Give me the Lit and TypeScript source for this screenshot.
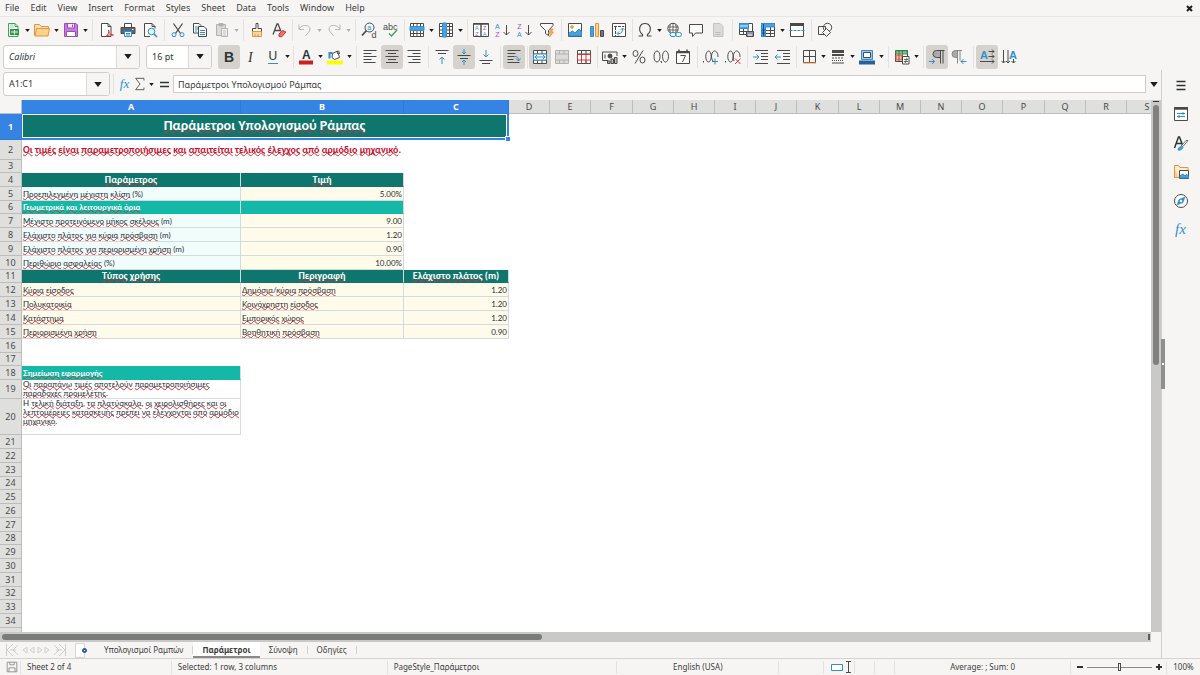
import { LitElement, html, css, svg, nothing, type TemplateResult } from "lit";
import { customElement, property } from "lit/decorators.js";
import { classMap } from "lit/directives/class-map.js";

const G = "#4a4a48";
const B = "#2f8fd0";
const O = "#e8923c";

const letter = (x: number, y: number, size: number, fill: string, t: string, extra = "") => svg`
  <text x=${x} y=${y} font-size=${size} fill=${fill} stroke="none" class=${extra}>${t}</text>`;

const icons: Record<string, TemplateResult> = {
  new: svg`<path d="M3.5 1.5h6.5l3 3v10h-9.5z" fill="#fff" stroke="#3aa655"/><path d="M10 1.5v3h3" stroke="#3aa655"/><path d="M5.5 7.5h8v5h-8z" fill="#3aa655" stroke="#2c8a45"/><path d="M6 10h7M9.500 8v4.500" stroke="#d6f2dc"/><path d="M5 3h3M5 5h4" stroke="#8fd09f"/>`,
  open: svg`<path d="M.5 13.500v-11h5l1.500 2h7.500v3" fill="#fbe3b8" stroke="${O}"/><path d="M2.500 6.500h13l-1.500 7.500h-13z" fill="#fad48c" stroke="${O}"/>`,
  save: svg`<path d="M1.500 1.500h11.500l1.500 1.500v11.500h-13z" fill="#c77bd8" stroke="#9b4db5"/><path d="M4.500 1.500h7v4.500h-7z" fill="#f6ecf9" stroke="#9b4db5"/><path d="M3.500 9.500h9v5h-9z" fill="#fff" stroke="#9b4db5"/><path d="M9.500 2.500v2.500" stroke="#9b4db5"/>`,
  pdf: svg`<path d="M3.500 1.500h6.500l3 3v10h-9.500z" fill="#fff" stroke="${G}"/><path d="M10 1.500v3h3" stroke="${G}"/><path d="M8 14.500c2-1.500 3-4 2.600-6.500 .8 4 2.500 5.500 4.900 5-3-.6-5.500-.3-7.500 1.500z" fill="#fff" stroke="#d9383a"/>`,
  print: svg`<path d="M4.500 5.500v-4h7v4" fill="#fff" stroke="${G}"/><path d="M1 5.500h14v6h-14z" fill="#5b6670" stroke="${G}"/><path d="M4.500 9.500h7v5h-7z" fill="#fff" stroke="${B}"/><path d="M6 11.500h4M6 13h4" stroke="${B}"/><path d="M12 7.500h1.500" stroke="#fff"/>`,
  preview: svg`<path d="M8 14.500h-5.500v-13h7.500l3 3v2" fill="#fff" stroke="${G}"/><path d="M10 1.500v3h3" stroke="${G}"/><circle cx="9.500" cy="9.500" r="3.300" fill="#e3f2fb" stroke="${B}"/><path d="M12 12l3 3" stroke="${B}" stroke-width="1.600"/>`,
  cut: svg`<path d="M3.500 1.500l7 10M12.500 1.500l-7 10" stroke="${G}" stroke-width="1.300"/><circle cx="4" cy="12.700" r="2" stroke="${B}"/><circle cx="12" cy="12.700" r="2" stroke="${B}"/>`,
  copy: svg`<path d="M1.500 1.500h5.500l2 2v7.500h-7.500z" fill="#fff" stroke="${G}"/><path d="M3 5h3M3 7h3M3 9h2" stroke="${B}"/><path d="M6.500 4.500h5.500l2.500 2.500v7.500h-8z" fill="#fff" stroke="${G}"/><path d="M8 8.500h5M8 10.500h5M8 12.500h5" stroke="${B}"/>`,
  paste: svg`<path d="M2.500 2.500h9v11h-9z" fill="#dcdbd9" stroke="#b3b1ae"/><path d="M5 1.500h4v2.500h-4z" fill="#b3b1ae" stroke="#b3b1ae"/><path d="M7.500 6.500h6v8h-6z" fill="#f2f1f0" stroke="#b3b1ae"/><path d="M9 9h3M9 11h3M9 13h3" stroke="#c4c2bf"/>`,
  clone: svg`<path d="M7 1.500h2v5h3.500v3h-9v-3h3.500z" fill="#fff" stroke="${G}"/><path d="M3.500 9.500h9v5h-9z" fill="#fbd9a5" stroke="${O}"/><path d="M6 12v2M9 12v2" stroke="${O}"/>`,
  clear: svg`<path d="M2 12.500l4-10.500h1l3 7.500M3.500 8.500h5.500" stroke="${G}" stroke-width="1.300"/><path d="M8 12l3.500-3.500 3.500 1.500-4.500 5-2.500-.5z" fill="#ef6d6d" stroke="#d9383a"/>`,
  undo: svg`<path d="M2 2.500v5h5M2 7c3-5 11-4.500 11 0 0 3-3 4-4.500 7" stroke="#b9b7b4"/>`,
  redo: svg`<path d="M14 2.500v5h-5M14 7c-3-5-11-4.500-11 0 0 3 3 4 4.500 7" stroke="#b9b7b4"/>`,
  find: svg`<circle cx="8.500" cy="5.500" r="4.500" fill="#eef7fd" stroke="${G}"/><path d="M5.500 8.500l-4.500 5" stroke="${G}" stroke-width="1.800"/>${letter(6.200, 8, 7, B, "a")}${letter(10.500, 15.500, 9, G, "d")}`,
  spell: svg`${letter(0, 7.500, 9, G, "abc")}<path d="M6 11.500l2.500 2.500 5.500-6" stroke="#35a853" stroke-width="1.400"/>`,
  row: svg`<path d="M1.500 1.500h13v13h-13zM4.500 1.500v13M8 1.500v13M11.500 1.500v13M1.500 11.500h13" fill="#fff" stroke="${G}"/><path d="M1 4.500h14v4h-14z" fill="#4ba0e0" stroke="${B}"/>`,
  col: svg`<path d="M1.500 1.500h13v13h-13zM1.500 4.500h13M1.500 8h13M1.500 11.500h13M11.500 1.500v13" fill="#fff" stroke="${G}"/><path d="M4.500 1h4v14h-4z" fill="#4ba0e0" stroke="${B}"/>`,
  sort: svg`<path d="M.5 1.500h15v13h-15z" fill="#fff" stroke="${G}"/><path d="M.5 2h15M8 2v12.500" stroke="${G}" stroke-width="1.400"/>${letter(2, 8, 5.500, B, "A")}${letter(2.300, 14, 5.500, "#a44cc0", "Z")}${letter(10, 8, 5.500, "#a44cc0", "Z")}${letter(9.800, 14, 5.500, B, "A")}`,
  asc: svg`${letter(0, 6.500, 7, B, "A")}${letter(.3, 14.500, 7, "#a44cc0", "Z")}<path d="M11.500 3v10M8.500 10l3 3 3-3" stroke="${G}"/>`,
  desc: svg`${letter(.3, 6.500, 7, "#a44cc0", "Z")}${letter(0, 14.500, 7, B, "A")}<path d="M11.500 3v10M8.500 10l3 3 3-3" stroke="${G}"/>`,
  filter: svg`<path d="M1.500 1.500h12.500v2l-4.500 5v5l-3-2v-3l-5-5z" fill="#fff" stroke="${G}"/><path d="M12 7l-2.500 4.500h2l-1 3.500 4-5h-2l1.500-3z" fill="#f7b25a" stroke="${O}" stroke-width=".8"/>`,
  image: svg`<path d="M1.500 1.500h13v13h-13z" fill="#fff" stroke="${G}"/><path d="M2 14v-3l3.500-2 2.500 2 4-4 2.500 2.500v4.500z" fill="#4ba0e0" stroke="${B}"/><circle cx="5" cy="5" r="1.300" fill="#f7b25a" stroke="${O}"/>`,
  chart: svg`<path d="M1.500 4.500h3v10h-3z" fill="#4ba0e0" stroke="${B}"/><path d="M6.500 1.500h3v13h-3z" fill="#fad48c" stroke="${O}"/><path d="M11.500 8.500h3v6h-3z" fill="#777" stroke="${G}"/>`,
  pivot: svg`<path d="M1.500 1.500h13v13h-13z" fill="#fff" stroke="${G}"/><path d="M3 4.500h10M4.500 5v9" stroke="${G}" stroke-dasharray="3 1"/><path d="M6.500 11.500c4 .5 5-1.500 5-5M6 11.500l2-2M6 11.500l2 2M11.500 6l-2 2M11.500 6l2 2" stroke="${B}"/>`,
  omega: svg`<path d="M1.500 14h4v-1.500c-5-4-3-11 2.500-11s7.500 7 2.500 11v1.500h4" stroke="${G}" stroke-width="1.200"/>`,
  link: svg`<circle cx="7" cy="6.500" r="5.200" fill="#fff" stroke="${G}"/><path d="M2 5h10M2 8h10M7 1.500v10M4.500 2.500c-1 3-1 5 0 8M9.500 2.500c1 3 1 5 0 8" stroke="${G}" stroke-width=".8"/><rect x="4" y="10.500" width="6" height="4" rx="2" fill="#f6f5f4" stroke="${B}"/><rect x="9.500" y="10.500" width="6" height="4" rx="2" stroke="${B}"/>`,
  comment: svg`<path d="M1.500 2.500h13v8.500h-7l-3 3.500v-3.500h-3z" fill="#fff" stroke="${G}"/>`,
  header: svg`<path d="M3.500 1.500h6.500l3 3v10h-9.500z" fill="#dcdbd9" stroke="#c4c2bf"/><path d="M5.500 10.500h5M5.500 12.500h5" stroke="#bbb"/>`,
  printarea: svg`<path d="M1.500 1.500h13v11h-13zM5.500 1.500v11M10 1.500v11M1.500 9.500h13" fill="#fff" stroke="${G}"/><path d="M1.500 1.500h9v5h-9z" fill="#4ba0e0" stroke="${B}"/><path d="M2 4h8" stroke="#d5ebf8"/><path d="M8.500 9.500h7v5h-7z" fill="#8c98a4" stroke="${G}"/><path d="M10 13h4" stroke="#fff"/>`,
  freeze: svg`<path d="M1.500 1.500h13v13h-13zM10.500 1.500v13M1.500 8.500h13M1.500 11.500h13" fill="#fff" stroke="${G}"/><path d="M1.500 1.500h13v3.500h-9v9.500h-4z" fill="#4ba0e0" stroke="${B}"/><path d="M3.500 2v12M2 8h3M2 11h3" stroke="#174f7c"/>`,
  split: svg`<path d="M1.500 1.500h13v13h-13z" fill="#fff" stroke="${G}"/><path d="M1 2.500h14" stroke="${G}" stroke-width="3"/><path d="M.5 8.500h15" stroke="${B}" stroke-dasharray="3 1"/>`,
  shapes: svg`<path d="M1.500 4.500h7v8h-7z" stroke="${G}"/><circle cx="10.500" cy="5.500" r="4.200" stroke="${G}"/><path d="M9.500 6.500l4 4-4 4-4-4z" fill="#f6f5f4" stroke="${G}"/>`,
  bold: svg`${letter(3, 13, 14, "#2e3436", "B", "b")}`,
  italic: svg`${letter(5, 13, 14, "#2e3436", "I", "i")}`,
  underline: svg`${letter(3.500, 11, 12, "#2e3436", "U")}<path d="M3 14.500h10" stroke="${B}"/>`,
  fontcolor: svg`${letter(4, 9.500, 12, "#2e3436", "A", "m")}<path d="M1 13.500h14" stroke="#c9211e" stroke-width="4"/>`,
  highlight: svg`<path d="M5.500 4.500l5-2.500 2 6.500-5 2-2.500-2z" fill="#fff" stroke="${G}"/><path d="M10.500 5c-1-4 2-4 2 0" stroke="${G}"/><path d="M2.500 9.500v-5.500h3" stroke="${B}" stroke-width="2"/><path d="M0 13.500h16" stroke="#ffff00" stroke-width="4"/>`,
  left: svg`<path d="M1.500 1.500h13M1.500 4.500h8M1.500 7.500h13M1.500 10.500h8M1.500 13.500h12" stroke="${G}"/>`,
  center: svg`<path d="M1.500 1.500h13M4 4.500h8M1.500 7.500h13M4 10.500h8M2 13.500h12" stroke="${G}"/>`,
  right: svg`<path d="M1.500 1.500h13M6.500 4.500h8M1.500 7.500h13M6.500 10.500h8M2.500 13.500h12" stroke="${G}"/>`,
  top: svg`<path d="M1.500 1.500h13M4 4.500h8" stroke="${G}"/><path d="M8 15v-7M5.500 10.500l2.500-2.500 2.500 2.500" stroke="${B}"/>`,
  middle: svg`<path d="M1.500 6.500h13M4 9.500h8" stroke="${G}"/><path d="M8 0v5M6 3l2 2 2-2M8 16v-5M6 13l2-2 2 2" stroke="${B}"/>`,
  bottom: svg`<path d="M1.500 11.500h13M4 14.500h8" stroke="${G}"/><path d="M8 1v7M5.500 5.500l2.500 2.500 2.500-2.500" stroke="${B}"/>`,
  wrap: svg`<path d="M1.500 1.500h13M1.500 4.500h8M1.500 7.500h8M1.500 10.500h6M1.500 13.500h12" stroke="${G}"/><path d="M8 7.500c4 0 4.500 1 4.500 4M10 9.500l2.500 2.500 2-2.500" stroke="${B}"/>`,
  merge: svg`<path d="M1.500 1.500h13v13h-13zM1.500 5h13M1.500 11h13M5.500 1.500v3.500M10 1.500v3.500M5.500 11v3.500M10 11v3.500" fill="#fff" stroke="${G}"/><path d="M1.500 5h13v6h-13z" fill="#fff" stroke="${B}"/><path d="M2.500 8h11M5 6l-2 2 2 2M11 6l2 2-2 2" stroke="${B}"/>`,
  mergecells: svg`<path d="M1.500 1.500h13v13h-13zM1.500 5h13M1.500 11h13M5.500 1.500v3.500M10 1.500v3.500M5.500 11v3.500M10 11v3.500" fill="#dcdbd9" stroke="#b3b1ae"/>`,
  unmerge: svg`<path d="M1.500 1.500h13v13h-13zM1.500 5h13M5.500 1.500v3.500M10 1.500v3.500M5.500 11v3.500M10 11v3.500" fill="#fff" stroke="${G}"/><path d="M1.500 5.500h13v5.500h-13zM5.500 5.500v9M10 5.500v9" stroke="#d9383a"/>`,
  currency: svg`<path d="M6 11.500h-5.500v-8.500h14.500v4" stroke="${G}"/><circle cx="8" cy="7" r="2" fill="${G}" stroke="${G}"/><path d="M3 5.500v4" stroke="${G}"/><path d="M5.500 12h2.500v2.500h-2.500zM9 10h2.500v4.500h-2.500zM12.500 8.500h2.500v6h-2.500z" fill="#bbb" stroke="${G}"/>`,
  percent: svg`<ellipse cx="4.500" cy="4.500" rx="2.500" ry="3" stroke="${G}"/><ellipse cx="11.500" cy="11" rx="2.500" ry="3" stroke="${G}"/><path d="M12 1.500l-8 13" stroke="${G}"/>`,
  number: svg`<ellipse cx="4" cy="7.500" rx="3" ry="5.500" stroke="${G}"/><ellipse cx="12.500" cy="7.500" rx="3" ry="5.500" stroke="${G}"/><path d="M7.500 12.500h1v1.500" stroke="${G}"/>`,
  date: svg`<path d="M1.500 2.500h13v12h-13z" fill="#fff" stroke="${G}"/><path d="M1.500 3.500h13M4 .5v3M12 .5v3" stroke="${G}" stroke-width="1.500"/><path d="M5.500 6.500h5l-3 6.500" stroke="${G}"/>`,
  adddec: svg`<path d="M.5 12v1.500" stroke="${G}"/><ellipse cx="5.500" cy="7.500" rx="2.700" ry="5.500" stroke="${G}"/><path d="M10 12c-3-4-1-10 1.500-10s3.500 3 3.500 6" stroke="${G}"/><path d="M12 9.500v6M9 12.500h6" stroke="${B}"/>`,
  deldec: svg`<path d="M.5 12v1.500" stroke="${G}"/><ellipse cx="5.500" cy="7.500" rx="2.700" ry="5.500" stroke="${G}"/><path d="M9 12c-2-4 0-10 2.500-10s3.500 3 3.500 6" stroke="${G}"/><path d="M10 9.500l5.500 5.500M15.500 9.500l-5.500 5.500" stroke="#d9383a"/>`,
  indent: svg`<path d="M2 1.500h13M8 4.500h7M8 7.500h7M8 10.500h7M2 14.500h13" stroke="${G}"/><path d="M0 8h6M3.500 5.500l2.500 2.500-2.500 2.500" stroke="${B}"/>`,
  outdent: svg`<path d="M2 1.500h13M8 4.500h7M8 7.500h7M8 10.500h7M2 14.500h13" stroke="${G}"/><path d="M0 8h6M2.500 5.500l-2.500 2.500 2.500 2.500" stroke="${B}"/>`,
  borders: svg`<path d="M2.500 1.500v12h12v-12z" stroke="${G}"/><path d="M8.500 2v12M2.500 7.500h12" stroke="${G}"/><path d="M2 14h13" stroke="${O}"/>`,
  style: svg`<path d="M2 2.500h12" stroke="${G}" stroke-width="3"/><path d="M2 6h12" stroke="${G}" stroke-width="2"/><path d="M2 9h12" stroke="${G}" stroke-dasharray="2 1"/><path d="M2 11.500h12" stroke="${G}" stroke-dasharray="1 1"/><path d="M2 14h12" stroke="${G}"/>`,
  linecolor: svg`<path d="M2.500 1.500h11v9h-11z" fill="#9cc8ea" stroke="${B}"/><path d="M4.500 3.500h7v5h-7z" fill="#fff" stroke="${G}"/><path d="M0 13.500h16" stroke="#2a6099" stroke-width="4"/>`,
  cond: svg`<path d="M1.500 1.500h12v11h-12z" fill="#fff" stroke="${G}"/><path d="M2 2h11v3h-11z" fill="#7dcc8c" stroke="#3aa655"/><path d="M2 6h6v5h-6z" fill="#f7b58a" stroke="#e0574a"/><path d="M5 2v10M8.500 2v10" stroke="${G}" stroke-width=".7"/><path d="M8.500 7.500h6.500v7.500h-6.500z" fill="#fff" stroke="${G}"/><path d="M10 10.500h4M10 12.500h4M13 9l-2 5" stroke="${G}" stroke-width=".8"/>`,
  ltr: svg`<path d="M8 1.500h3v7h-3a3.500 3.500 0 0 1 0-7z" fill="#aaa"/><path d="M11.500 1.500v13M14 1.500v13M15.500 1.500h-8a3.500 3.500 0 0 0 0 7h3.500" stroke="${G}"/><path d="M0 12.500h5.500M3 10l2.500 2.500-2.500 2.500" stroke="${B}"/>`,
  rtl: svg`<path d="M4.500 1.500h2v7h-2a3.500 3.500 0 0 1 0-7z" fill="#aaa"/><path d="M6.500 1.500v13M9 1.500v10M11 1.500h-6.500a3.500 3.500 0 0 0 0 7h2" stroke="#888"/><path d="M15.500 12.500h-5.500M12.500 10l-2.500 2.500 2.500 2.500" stroke="${B}"/>`,
  horiz: svg`${letter(1, 9.500, 11, B, "A", "m")}<path d="M9.500 2.500h5.500M9.500 7.500h5.500M1 12.500h14M13 .5l2 2-2 2M13 5.500l2 2-2 2M13 10.500l2 2-2 2" stroke="${G}"/>`,
  vert: svg`${letter(8, 9.500, 11, B, "A", "m")}<path d="M2.500 1v13M7 1v13M12.500 10v4M.5 12l2 2 2-2M5 12l2 2 2-2M10.500 12l2 2 2-2" stroke="${G}"/>`,
  fx: svg`${letter(2, 12, 15, B, "fx", "s")}`,
  sigma: svg`<path d="M12.500 4v-2.500h-9.500l5 6.500-5 6.500h9.500v-2.500" stroke="${G}"/>`,
  equal: svg`<path d="M4 6.500h9M4 10.500h9" stroke="#2e3436" stroke-width="1.600"/>`,
  menu: svg`<path d="M3.500 4.500h9M3.500 8.500h9M3.500 12.500h9" stroke="#2e3436" stroke-width="1.500"/>`,
  props: svg`<path d="M1.500 1.500h13v13h-13z" fill="#fff" stroke="${G}"/><path d="M1 2.500h14" stroke="${G}" stroke-width="2.500"/><path d="M4 7.500h8M4 10.500h8M10 6v3M6 9v3" stroke="${B}"/>`,
  styles: svg`<path d="M1.500 13l4-11h1l3 8M3 8.500h5.500" stroke="#2e3436" stroke-width="1.500"/><path d="M15 5.500l-5 6-1.500-1 4.500-5z" fill="#fff" stroke="${G}" stroke-width=".8"/><path d="M5 15c.5-3 3-4.500 5-3-.5 2.500-2.500 3.500-5 3z" fill="#4ba0e0" stroke="${B}"/>`,
  gallery: svg`<path d="M1.500 13.500v-12h4l1.500 2h8v3" fill="#fdeccd" stroke="${O}"/><path d="M1.500 5v8.500h5" fill="#fad48c" stroke="${O}"/><path d="M6.500 6.500h9v8h-9z" fill="#fff" stroke="${G}"/><path d="M7 14v-2l3-2 2 2 1.500-1.500 2 1.500v2z" fill="#4ba0e0" stroke="${B}"/>`,
  navigator: svg`<circle cx="8" cy="8" r="6.500" fill="#fff" stroke="${G}"/><path d="M12 4l-2 5.500-6 2.500 2-5.500z" fill="#2f8fd0" stroke="${B}" stroke-width=".6"/><circle cx="8" cy="8" r="1.200" fill="#fff"/>`,
  docsave: svg`<path d="M2.500 2.500h11v11h-11z" stroke="#8b8987"/><path d="M5.500 2.500v3h5v-3M4.500 13.500v-4.500h7v4.500" stroke="#8b8987"/>`,
  addsheet: svg`<path d="M1.500 1.500h9v14h-9z" fill="#fff" stroke="#d8d6d3"/><path d="M8 8.500h5M10.500 6v5" stroke="#2a5fa8" stroke-width="2.500"/><path d="M10 8.500h1" stroke="#fff"/>`,
  first: svg`<path d="M2.500 2v12M9 2l-6 6 6 6M14 3l-5 5 5 5M6 8h6" stroke="#cfcdca"/>`,
  prev: svg`<path d="M7 5l-4 3 4 3zM14 5l-4 3 4 3z" stroke="#cfcdca"/>`,
  next: svg`<path d="M2 5l4 3-4 3zM9 5l4 3-4 3z" stroke="#cfcdca"/>`,
  last: svg`<path d="M13.500 2v12M7 2l6 6-6 6M2 3l5 5-5 5M4 8h6" stroke="#cfcdca"/>`,
  selmode: svg`<path d="M1.500 5.500h11v6h-11z" fill="#fff" stroke="${B}"/>`,
  ibeam: svg`<path d="M0 2.500h5M2.500 2.500v11M0 13.500h5" stroke="${G}"/>`,
};

const iconSvg = (name: string) => html`<svg class="icon" viewBox="0 0 16 16" aria-hidden="true" fill="none">${icons[name]}</svg>`;
const caret = html`<svg class="caret" viewBox="0 0 6 4" aria-hidden="true"><path d="M0 0h6L3 4z" /></svg>`;

const iconStyles = css`
  * { box-sizing: border-box; }
  button {
    font: inherit; color: inherit; border: 0; background: none; padding: 0; margin: 0;
    display: flex; align-items: center; justify-content: center;
  }
  .icon { width: 16px; height: 16px; display: block; flex: none; overflow: visible; }
  .icon text { font-family: "Liberation Sans", sans-serif; }
  .icon .b { font-weight: 700; }
  .icon .m { font-weight: 700; }
  .icon .i { font-style: italic; font-family: "Liberation Serif", serif; }
  .icon .s { font-style: italic; font-family: "Liberation Serif", serif; }
  .caret { width: 5px; height: 3px; display: block; fill: #1c1c1c; flex: none; }
`;

/* "+" opens a drop-down, "*" is toggled on, "-" is disabled, "|" and "!" are wide and tight separators */
const standardBar = "new+ open+ save+ | pdf print preview | cut copy -paste+ | clone clear ! -undo+ -redo+ | find spell ! row+ col+ | sort asc desc filter | image chart pivot ! omega+ link comment -header | printarea freeze+ split | shapes";
const formatBar = "*bold italic underline+ ! fontcolor+ highlight+ | left *center right | top *middle bottom | *wrap ! *merge -mergecells unmerge ! currency+ percent number date | adddec deldec | indent outdent ! borders+ style+ linecolor+ | cond+ | *ltr rtl | *horiz vert";

@customElement("tool-strip")
class ToolStrip extends LitElement {
  @property() items = "";
  static styles = [iconStyles, css`
    :host { display: flex; align-items: center; }
    .tool { width: 22px; height: 24px; border-radius: 3px; }
    .on { background: #d5d1cd; }
    .drop { width: 7px; height: 24px; }
    .sep { width: 6px; height: 22px; display: flex; justify-content: center; }
    .tight { width: 4px; }
    .sep::before { content: ""; width: 1px; background: #e3e1df; }
    .off .caret { fill: #b3b1ae; }
  `];
  render() {
    return this.items.split(" ").map((t) => {
      if (t === "|" || t === "!") return html`<span class=${classMap({ sep: true, tight: t === "!" })}></span>`;
      const name = t.replace(/[+*-]/g, "");
      const on = t.startsWith("*");
      const off = t.startsWith("-");
      return html`<button class=${classMap({ tool: true, on })} aria-label=${name} aria-pressed=${on} ?disabled=${off}>${iconSvg(name)}</button>
        ${t.endsWith("+") ? html`<button class=${classMap({ drop: true, off })} aria-label="${name} options">${caret}</button>` : nothing}`;
    });
  }
}

type Cell = { text?: string; cls?: string; span?: number; lines?: string[] };
type Row = { size?: string; cells?: Cell[] };

const lab = (text: string): Cell => ({ text, cls: "label" });
const inp = (text: string): Cell => ({ text, cls: "entry" });
const num = (text: string): Cell => ({ text, cls: "entry num" });
const head = (text: string): Cell => ({ text, cls: "head" });
const band = (text: string): Cell => ({ text, cls: "band" });

const rows: Row[] = [
  { size: "h26", cells: [{ text: "Παράμετροι Υπολογισμού Ράμπας", cls: "title", span: 3 }] },
  { size: "h20", cells: [{ text: "Οι τιμές είναι παραμετροποιήσιμες και απαιτείται τελικός έλεγχος από αρμόδιο μηχανικό.", cls: "warn", span: 3 }] },
  { size: "h13" },
  { cells: [head("Παράμετρος"), head("Τιμή")] },
  { cells: [lab("Προεπιλεγμένη μέγιστη κλίση (%)"), num("5.00%")] },
  { size: "h13", cells: [band("Γεωμετρικά και λειτουργικά όρια"), band("")] },
  { cells: [lab("Μέγιστο προτεινόμενο μήκος σκέλους (m)"), num("9.00")] },
  { cells: [lab("Ελάχιστο πλάτος για κύρια πρόσβαση (m)"), num("1.20")] },
  { cells: [lab("Ελάχιστο πλάτος για περιορισμένη χρήση (m)"), num("0.90")] },
  { cells: [lab("Περιθώριο ασφαλείας (%)"), num("10.00%")] },
  { size: "h13", cells: [head("Τύπος χρήσης"), head("Περιγραφή"), head("Ελάχιστο πλάτος (m)")] },
  { cells: [inp("Κύρια είσοδος"), inp("Δημόσια/κύρια πρόσβαση"), num("1.20")] },
  { cells: [inp("Πολυκατοικία"), inp("Κοινόχρηστη είσοδος"), num("1.20")] },
  { cells: [inp("Κατάστημα"), inp("Εμπορικός χώρος"), num("1.20")] },
  { cells: [inp("Περιορισμένη χρήση"), inp("Βοηθητική πρόσβαση"), num("0.90")] },
  {}, { size: "h13" },
  { cells: [band("Σημείωση εφαρμογής")] },
  { size: "h19", cells: [{ cls: "note", lines: ["Οι παραπάνω τιμές αποτελούν παραμετροποιήσιμες", "παραδοχές προμελέτης."] }] },
  { size: "h36", cells: [{ cls: "note", lines: ["Η τελική διάταξη, τα πλατύσκαλα, οι χειρολισθήρες και οι", "λεπτομέρειες κατασκευής πρέπει να ελέγχονται από αρμόδιο", "μηχανικό."] }] },
  ...Array.from({ length: 15 }, (_, i): Row => ({ size: i % 4 === 3 ? "h13" : "" })),
];
const columns = [..."ABCDEFGHIJKLMNOPQRS"];

/* Every Greek word longer than one letter carries the spell-checker's wave. */
const spelled = (text: string) =>
  text.split(/([\u0370-\u03ff]{2,})/).map((p, i) => (i % 2 ? html`<span class="typo">${p}</span>` : p));

@customElement("sheet-grid")
class SheetGrid extends LitElement {
  static styles = [iconStyles, css`
    :host { display: block; overflow: hidden; background: #fff; min-width: 0; }
    table { border-collapse: separate; border-spacing: 0; table-layout: fixed; width: 0; }
    .c-idx { width: 22px; } .c-a { width: 219px; } .c-b { width: 163px; } .c-c { width: 105px; }
    .c-n { width: 41px; } .c-w { width: 42px; }
    th, td { padding: 0; overflow: hidden; white-space: nowrap; vertical-align: middle; }
    thead th, .idx {
      font: 9px/12px "Noto Sans", sans-serif; color: #4a4a48; background: #dfdfde; text-align: center;
      border-right: 1px solid #bdbdbb; border-bottom: 1px solid #bdbdbb;
    }
    thead th { height: 14px; }
    thead .corner { background: #f6f5f4; }
    thead .sel, .idx.sel { background: #3584e4; color: #fff; font-weight: 700; border-color: #2f79d2; }
    tbody tr { height: 14px; }
    tbody .h13 { height: 13px; } tbody .h19 { height: 19px; } tbody .h20 { height: 20px; } tbody .h26 { height: 26px; } tbody .h36 { height: 36px; }
    td { font: 8px/12px Lato, sans-serif; color: #1f2d3a; }
    .box { display: block; overflow: hidden; padding: 0 1px; }
    .label, .entry, .head, .band, .note { border-right: 1px solid #d3dbe0; border-bottom: 1px solid #d3dbe0; }
    .label { background: #f0fdfa; }
    .entry { background: #fffbeb; }
    .num { text-align: right; }
    .head { background: #0f766e; color: #fff; font: 700 10px/12px Carlito, Lato, sans-serif; text-align: center; border-bottom-color: #0f766e; }
    .band { background: #14b8a6; color: #fff; font-weight: 700; border-bottom-color: #14b8a6; }
    .note { line-height: 9px; vertical-align: top; }
    .line { display: block; }
    .title {
      background: #0f766e; color: #fff; font: 700 14px/20px Carlito, Lato, sans-serif; text-align: center;
      border-right: 2px solid #3584e4; border-bottom: 2px solid #3584e4; box-shadow: inset 0 0 0 1px #fff;
      position: relative; overflow: visible;
    }
    .handle { position: absolute; right: -3px; bottom: -3px; width: 5px; height: 5px; background: #3584e4; border: 1px solid #fff; border-width: 1px 0 0 1px; }
    .warn { color: #c8102e; font: 700 10px/14px Carlito, Lato, sans-serif; }
    .typo { text-decoration: underline wavy #d93030 1px; text-underline-offset: -1px; text-decoration-skip-ink: none; }
  `];
  render() {
    return html`<table>
      <colgroup>
        <col class="c-idx" /><col class="c-a" /><col class="c-b" /><col class="c-c" />
        ${columns.slice(3).map((_, i) => html`<col class=${i % 5 === 2 ? "c-w" : "c-n"} />`)}
      </colgroup>
      <thead><tr>
        <th class="corner"></th>
        ${columns.map((c, i) => html`<th scope="col" class=${classMap({ sel: i < 3 })}>${c}</th>`)}
      </tr></thead>
      <tbody>
        ${rows.map((r, i) => html`<tr class=${r.size || nothing}>
          <th scope="row" class=${classMap({ idx: true, sel: i === 0 })}>${i < 34 ? i + 1 : nothing}</th>
          ${(r.cells ?? []).map((c) => html`<td class=${c.cls ?? ""} colspan=${c.span ?? 1}>
            <span class="box">${c.lines ? c.lines.map((l) => html`<span class="line">${spelled(l)}</span>`) : spelled(c.text ?? "")}</span>
            ${c.cls === "title" ? html`<span class="handle"></span>` : nothing}
          </td>`)}
        </tr>`)}
      </tbody>
    </table>`;
  }
}

@customElement("app-root")
class AppRoot extends LitElement {
  static styles = [iconStyles, css`
    :host {
      display: flex; flex-direction: column; height: 100vh; overflow: hidden;
      background: #f6f5f4; color: #3d3d3b; font: 9px/12px "Noto Sans", sans-serif;
    }
    .menubar { display: flex; justify-content: space-between; align-items: center; height: 17px; border-bottom: 1px solid #e8e6e4; padding-right: 6px; flex: none; }
    .menus { display: flex; gap: 1px; }
    .menus button { padding: 0 5px; height: 16px; }
    .close { width: 10px; height: 10px; }
    .close svg { width: 7px; height: 7px; stroke: #1c1c1c; stroke-width: 2; }
    .bar { display: flex; align-items: center; height: 27px; padding-left: 2px; flex: none; }
    .standard { height: 26px; }
    .format { padding-left: 3px; gap: 6px; }
    .combo { display: grid; grid-template-columns: 1fr 23px; height: 24px; background: #fff; border: 1px solid #d0cdca; border-radius: 3px; overflow: hidden; flex: none; }
    .combo > * { grid-row: 1; min-width: 0; }
    .combo select, .combo input {
      appearance: none; grid-column: 1 / -1; width: 100%; border: 0; background: none; margin: 0; padding: 0 0 0 5px;
      font: inherit; color: #2e3436; outline: 0;
    }
    .combo .arrow { grid-column: 2; display: flex; align-items: center; justify-content: center; background: #f6f5f4; border-left: 1px solid #dddad7; pointer-events: none; }
    .combo .caret, .expand .caret { width: 8px; height: 5px; }
    .fontname { width: 137px; } .fontname select { font-style: italic; }
    .fontsize { width: 66px; }
    .namebox { width: 107px; }
    .body { flex: 1; display: flex; min-height: 0; }
    .main { flex: 1; display: flex; flex-direction: column; min-width: 0; border-right: 1px solid #d0cecb; }
    .formula { display: flex; align-items: center; height: 28px; padding-left: 3px; flex: none; }
    .formula .vsep { width: 1px; height: 20px; background: #e3e1df; margin: 0 3px; }
    .formula .fn { width: 15px; height: 20px; }
    .formula .fn .icon { width: 14px; height: 14px; }
    .formula .dd { width: 8px; height: 20px; }
    .formula .eq { width: 18px; height: 20px; }
    .formula .text { flex: 1; min-width: 0; height: 18px; border: 1px solid #d0cdca; background: #fff; font: inherit; color: #3d3d3b; padding: 0 4px; margin: 0; outline: 0; }
    .expand { width: 15px; height: 18px; }
    .sheetarea { flex: 1; min-height: 0; display: grid; grid-template: minmax(0, 1fr) 10px / minmax(0, 1fr) 10px; border-top: 2px solid #f6f5f4; }
    .vscroll { background: #c9c9c8; padding: 1px 2px 0 2px; }
    .vscroll::before { content: ""; display: block; height: 1px; margin-bottom: 3px; background: #2e3436; }
    .vthumb { background: #7f807f; border-radius: 3px; height: 49%; }
    .hscroll { background: #c9c9c8; padding: 2px 1px 2px 2px; display: flex; justify-content: space-between; }
    .hscroll::after { content: ""; width: 2px; background: #5c5d5c; }
    .hthumb { background: #7b7d7b; border-radius: 3px; width: 47%; }
    .tabs { display: flex; align-items: stretch; height: 16px; font-size: 8px; padding-left: 4px; flex: none; }
    .tabs .nav { width: 16px; }
    .tabs .add { width: 16px; margin: 0 5px 0 6px; }
    .tabs .tab { padding: 0 9px; border-right: 1px solid #d5d3d0; margin: 4px 0; }
    .tabs .active { background: #fff; font-weight: 700; border-right: 0; border-bottom: 2px solid #8b8987; padding-top: 2px; margin: 0; }
    .side { width: 38px; display: flex; flex-direction: column; align-items: center; gap: 5px; padding-top: 3px; position: relative; }
    .side button { width: 24px; height: 24px; }
    .grip { position: absolute; left: -1px; top: 269px; width: 4px; height: 50px; background: #8f8f8d; display: flex; align-items: center; justify-content: center; }
    .grip::before { content: ""; width: 2px; height: 2px; background: #fff; }
    .status {
      display: grid; grid-template-columns: 21px 151fr 216fr 230fr 162fr 45fr 31px 20px 20px 176fr 96px 33px;
      align-items: center; height: 17px; border-top: 1px solid #d5d3d0; font-size: 8px; flex: none; white-space: nowrap;
    }
    .status > * { display: flex; align-items: center; height: 13px; padding-left: 6px; border-right: 1px solid #e3e1df; min-width: 0; }
    .status > :last-child { border-right: 0; }
    .status .mid { justify-content: center; padding: 0; }
    .status .doc { padding-left: 5px; }
    .status .doc .icon { width: 14px; height: 14px; }
    .status .zoom { padding: 0 2px 0 4px; gap: 2px; }
    .zoom button { width: 10px; height: 10px; flex: none; }
    .zoom svg { width: 8px; height: 8px; stroke: #2e3436; stroke-width: 2; fill: none; }
    .zoom input { appearance: none; flex: 1; min-width: 0; height: 10px; margin: 0; background: linear-gradient(#8b8987, #8b8987) center / 100% 1px no-repeat; }
    .zoom input::-webkit-slider-thumb { appearance: none; width: 3px; height: 8px; border: 1px solid #4a4a48; background: #f6f5f4; }
  `];
  render() {
    return html`
      <header class="menubar">
        <nav class="menus">${"File Edit View Insert Format Styles Sheet Data Tools Window Help".split(" ").map((m) => html`<button>${m}</button>`)}</nav>
        <button class="close" aria-label="Close"><svg viewBox="0 0 7 7"><path d="M1 1l5 5M6 1l-5 5" /></svg></button>
      </header>
      <div class="bar standard"><tool-strip .items=${standardBar}></tool-strip></div>
      <div class="bar format">
        <div class="combo fontname"><select aria-label="Font name"><option>Calibri</option></select><span class="arrow">${caret}</span></div>
        <div class="combo fontsize"><select aria-label="Font size"><option>16 pt</option></select><span class="arrow">${caret}</span></div>
        <tool-strip .items=${formatBar}></tool-strip>
      </div>
      <div class="body">
        <main class="main">
          <div class="formula">
            <div class="combo namebox"><input aria-label="Name box" value="A1:C1" /><span class="arrow">${caret}</span></div>
            <span class="vsep"></span>
            <button class="fn" aria-label="Function wizard">${iconSvg("fx")}</button>
            <button class="fn" aria-label="Select function">${iconSvg("sigma")}</button>
            <button class="dd" aria-label="Function options">${caret}</button>
            <button class="eq" aria-label="Formula">${iconSvg("equal")}</button>
            <input class="text" aria-label="Input line" value="Παράμετροι Υπολογισμού Ράμπας" />
            <button class="expand" aria-label="Expand formula bar">${caret}</button>
          </div>
          <div class="sheetarea">
            <sheet-grid></sheet-grid>
            <div class="vscroll"><div class="vthumb"></div></div>
            <div class="hscroll"><div class="hthumb"></div></div>
          </div>
          <div class="tabs">
            ${["first", "prev", "next", "last"].map((n) => html`<button class="nav" aria-label="${n} sheet">${iconSvg(n)}</button>`)}
            <button class="add" aria-label="Add sheet">${iconSvg("addsheet")}</button>
            ${["Υπολογισμοί Ραμπών", "Παράμετροι", "Σύνοψη", "Οδηγίες"].map((t, i) => html`<button class=${classMap({ tab: true, active: i === 1 })}>${t}</button>`)}
          </div>
        </main>
        <aside class="side">
          ${["menu", "props", "styles", "gallery", "navigator", "fx"].map((n) => html`<button aria-label=${n}>${iconSvg(n)}</button>`)}
          <span class="grip"></span>
        </aside>
      </div>
      <footer class="status">
        <span class="doc">${iconSvg("docsave")}</span>
        <span>Sheet 2 of 4</span>
        <span>Selected: 1 row, 3 columns</span>
        <span>PageStyle_Παράμετροι</span>
        <span class="mid">English (USA)</span>
        <span></span>
        <span>${iconSvg("selmode")}${iconSvg("ibeam")}</span>
        <span></span>
        <span></span>
        <span class="mid">Average: ; Sum: 0</span>
        <span class="zoom">
          <button aria-label="Zoom out"><svg viewBox="0 0 8 8"><path d="M1 4h6" /></svg></button>
          <input type="range" aria-label="Zoom" min="0" max="100" value="50" />
          <button aria-label="Zoom in"><svg viewBox="0 0 8 8"><path d="M1 4h6M4 1v6" /></svg></button>
        </span>
        <span class="mid">100%</span>
      </footer>`;
  }
}
